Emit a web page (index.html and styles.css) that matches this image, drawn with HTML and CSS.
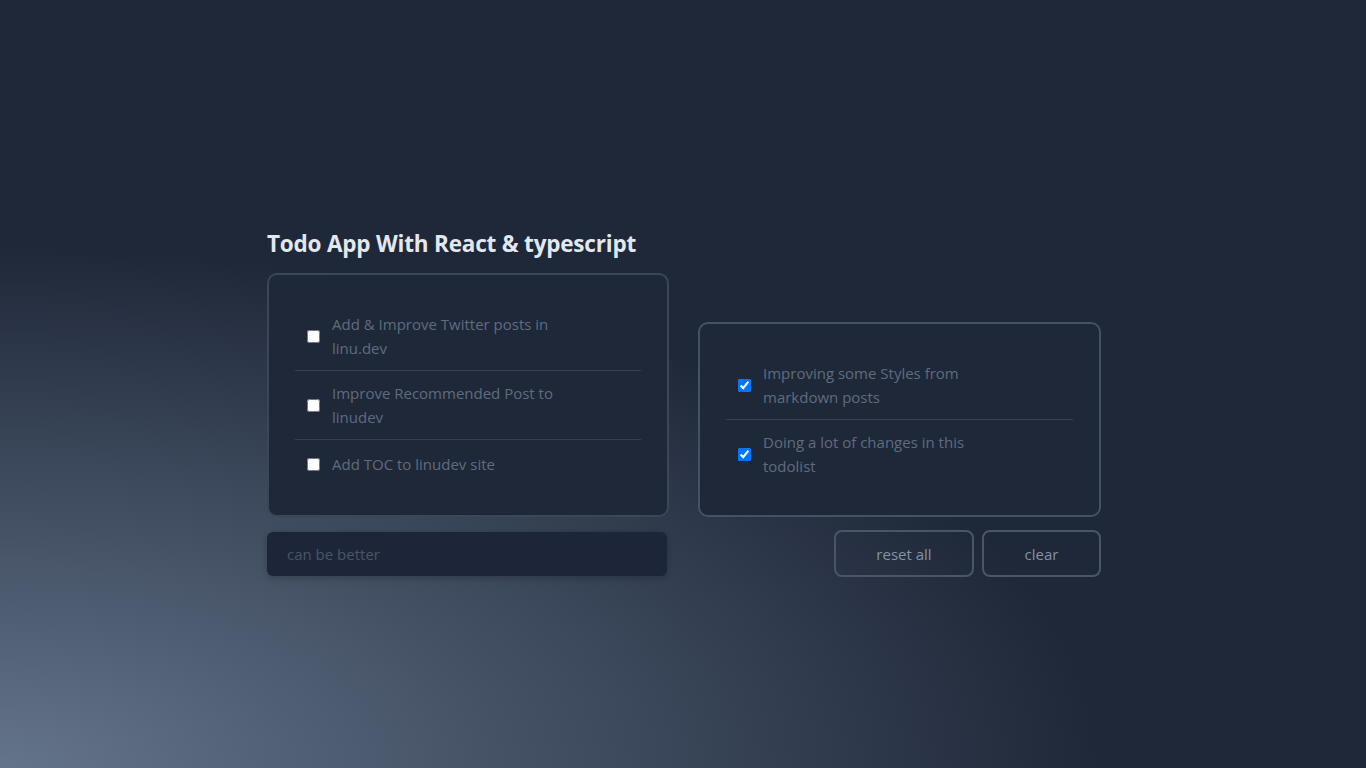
FILE: index.html
```html
<!DOCTYPE html>
<html lang="en">
<head>
<meta charset="utf-8">
<title>Todo App With React &amp; typescript</title>
<link rel="stylesheet" href="styles.css">
</head>
<body>
<main class="app">
  <div class="board">
    <section class="column column--todo">
      <h1 class="title">Todo App With React &amp; typescript</h1>
      <div class="card card--todo">
        <ul class="list">
          <li class="item"><input type="checkbox" class="check"><span class="label">Add &amp; Improve Twitter posts in linu.dev</span></li>
          <li class="item"><input type="checkbox" class="check"><span class="label">Improve Recommended Post to linudev</span></li>
          <li class="item"><input type="checkbox" class="check"><span class="label">Add TOC to linudev site</span></li>
        </ul>
      </div>
    </section>
    <section class="column column--done">
      <div class="card card--done">
        <ul class="list">
          <li class="item"><input type="checkbox" class="check" checked><span class="label">Improving some Styles from markdown posts</span></li>
          <li class="item"><input type="checkbox" class="check" checked><span class="label">Doing a lot of changes in this todolist</span></li>
        </ul>
      </div>
    </section>
    <input type="text" class="new-todo" placeholder="can be better">
    <div class="actions">
      <button class="btn btn--reset">reset all</button>
      <button class="btn btn--clear">clear</button>
    </div>
  </div>
</main>
</body>
</html>
```
FILE: styles.css
```css
html, body {
  margin: 0;
  height: 100%;
}
body {
  font-family: "Open Sans", "Noto Sans", sans-serif;
  background-color: #1f2839;
  background-image: radial-gradient(ellipse 1100px 520px at 0 100%, #64748b 0%, #1f2839 100%);
  color: #64748b;
  overflow: hidden;
}
.app {
  display: flex;
  justify-content: center;
  padding-top: 228px;
  padding-left: 2px;
}
.board {
  display: grid;
  grid-template-columns: 402px 403px;
  column-gap: 29px;
  row-gap: 13px;
  align-items: end;
}
.title {
  margin: 0 0 13px;
  font-size: 22.5px;
  line-height: 32px;
  font-weight: 700;
  color: #e2e8f0;
  letter-spacing: -0.2px;
}
.card {
  border: 2px solid #455165;
  border-radius: 10px;
  padding: 27px 26px 27px;
  background: #1f2839;
}
.card--todo {
  padding-bottom: 29px;
  border-color: #3b4659;
}
.card--todo .item:last-child {
  padding-top: 12px;
}
.list {
  list-style: none;
  margin: 0;
  padding: 0;
}
.item {
  display: flex;
  align-items: center;
  gap: 12px;
  padding: 10px 0 10px 12px;
}
.item + .item {
  border-top: 1px solid #353f51;
}
.check {
  margin: 0;
  width: 13px;
  height: 13px;
  flex: none;
}
.label {
  max-width: 240px;
  font-size: 15px;
  line-height: 24px;
  color: #5f6b7f;
}
.new-todo {
  align-self: center;
  box-sizing: border-box;
  width: 400px;
  height: 44px;
  border: none;
  border-radius: 6px;
  background: #1d2638;
  box-shadow: 0 2px 6px rgba(10, 15, 25, 0.25);
  padding: 0 20px;
  font-family: inherit;
  font-size: 15px;
  color: #94a3b8;
  outline: none;
}
.new-todo::placeholder {
  color: #4a5567;
}
.actions {
  display: flex;
  justify-content: flex-end;
  gap: 8px;
}
.btn {
  height: 47px;
  border: 2px solid #4a5568;
  border-radius: 8px;
  background: transparent;
  color: #8591a4;
  font-family: inherit;
  font-size: 15px;
}
.btn--reset { width: 140px; }
.btn--clear { width: 119px; }
```
